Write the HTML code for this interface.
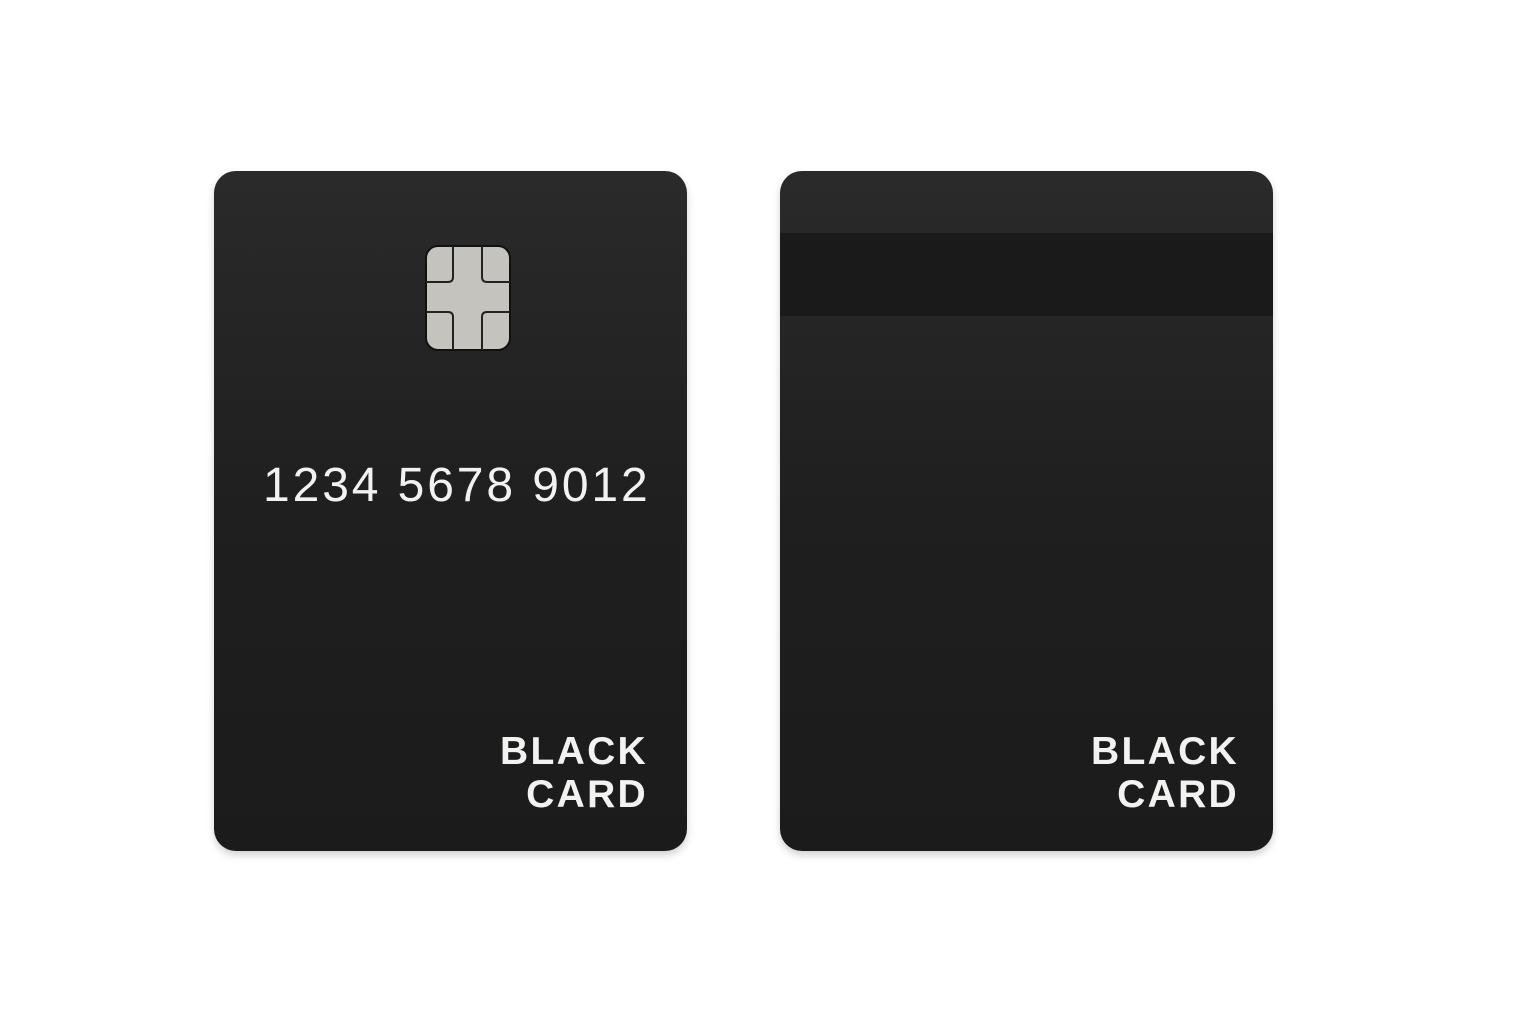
<!DOCTYPE html>
<html><head><style>
body{margin:0;width:1536px;height:1024px;background:#fff;position:relative;overflow:hidden;font-family:"Liberation Sans",sans-serif}
.card{position:absolute;top:171px;height:680px;border-radius:22px;background:linear-gradient(180deg,#2a2a2a 0%,#1f1f1f 50%,#1b1b1b 100%);box-shadow:0 4px 8px rgba(0,0,0,.18)}
.c1{left:214px;width:473px}
.c2{left:780px;width:493px;overflow:hidden}
.stripe{position:absolute;left:0;right:0;top:62px;height:83px;background:#1a1a1a}
.num{position:absolute;left:49px;top:287px;font-size:48px;color:#f2f2f0;letter-spacing:2.9px;white-space:nowrap}
.bc{position:absolute;right:39px;top:559px;font-size:39px;font-weight:bold;color:#f2f2f0;letter-spacing:2.3px;text-align:right;line-height:43px}
.c2 .bc{right:34px}
</style></head><body>
<div class="card c1">
<svg style="position:absolute;left:211px;top:74px" width="86" height="106" viewBox="0 0 86 106">
<rect x="1" y="1" width="84" height="104" rx="12" fill="#c4c3be" stroke="#111" stroke-width="2"/>
<g fill="none" stroke="#222" stroke-width="2">
<path d="M28 1 V32 Q28 37 23 37 H1"/><path d="M57 1 V32 Q57 37 62 37 H85"/>
<path d="M28 105 V72 Q28 67 23 67 H1"/><path d="M57 105 V72 Q57 67 62 67 H85"/>
</g></svg>
<div class="num">1234 5678 9012</div>
<div class="bc">BLACK<br>CARD</div>
</div>
<div class="card c2">
<div class="stripe"></div>
<div class="bc">BLACK<br>CARD</div>
</div>
</body></html>
